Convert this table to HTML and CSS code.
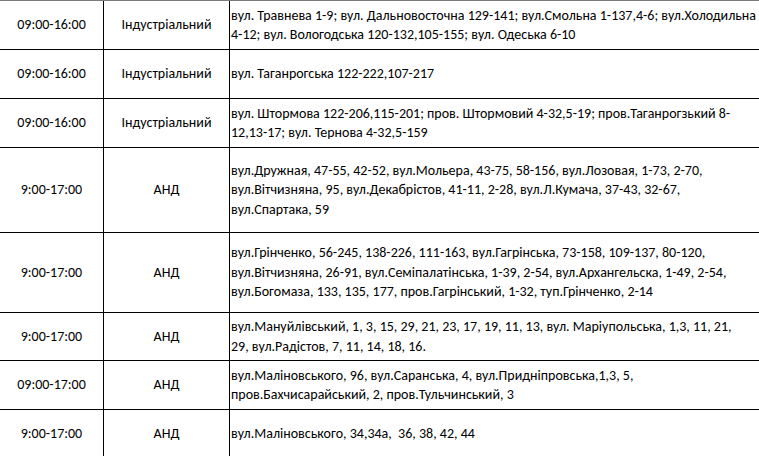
FILE: index.html
```html
<!DOCTYPE html>
<html lang="uk">
<head>
<meta charset="utf-8">
<title>Графік відключень</title>
<link rel="stylesheet" href="styles.css">
</head>
<body>
<table class="sched">
  <colgroup>
    <col class="c-time">
    <col class="c-dist">
    <col class="c-addr">
  </colgroup>
  <tbody>
    <tr class="h48">
      <td class="time">09:00-16:00</td>
      <td class="dist">Індустріальний</td>
      <td class="addr">вул. Травнева 1-9; вул. Дальновосточна 129-141; вул.Смольна 1-137,4-6; вул.Холодильна<br>4-12; вул. Вологодська 120-132,105-155; вул. Одеська 6-10</td>
    </tr>
    <tr class="h48">
      <td class="time">09:00-16:00</td>
      <td class="dist">Індустріальний</td>
      <td class="addr">вул. Таганрогська 122-222,107-217</td>
    </tr>
    <tr class="h48">
      <td class="time">09:00-16:00</td>
      <td class="dist">Індустріальний</td>
      <td class="addr">вул. Штормова 122-206,115-201; пров. Штормовий 4-32,5-19; пров.Таганрогзький 8-<br>12,13-17; вул. Тернова 4-32,5-159</td>
    </tr>
    <tr class="h84">
      <td class="time">9:00-17:00</td>
      <td class="dist">АНД</td>
      <td class="addr">вул.Дружная, 47-55, 42-52, вул.Мольера, 43-75, 58-156, вул.Лозовая, 1-73, 2-70,<br>вул.Вітчизняна, 95, вул.Декабрістов, 41-11, 2-28, вул.Л.Кумача, 37-43, 32-67,<br>вул.Спартака, 59</td>
    </tr>
    <tr class="h79">
      <td class="time">9:00-17:00</td>
      <td class="dist">АНД</td>
      <td class="addr">вул.Грінченко, 56-245, 138-226, 111-163, вул.Гагрінська, 73-158, 109-137, 80-120,<br>вул.Вітчизняна, 26-91, вул.Семіпалатінська, 1-39, 2-54, вул.Архангельска, 1-49, 2-54,<br>вул.Богомаза, 133, 135, 177, пров.Гагрінський, 1-32, туп.Грінченко, 2-14</td>
    </tr>
    <tr class="h47">
      <td class="time">9:00-17:00</td>
      <td class="dist">АНД</td>
      <td class="addr">вул.Мануйлівський, 1, 3, 15, 29, 21, 23, 17, 19, 11, 13, вул. Маріупольська, 1,3, 11, 21,<br>29, вул.Радістов, 7, 11, 14, 18, 16.</td>
    </tr>
    <tr class="h48">
      <td class="time">09:00-17:00</td>
      <td class="dist">АНД</td>
      <td class="addr">вул.Маліновського, 96, вул.Саранська, 4, вул.Придніпровська,1,3, 5,<br>пров.Бахчисарайський, 2, пров.Тульчинський, 3</td>
    </tr>
    <tr class="h48">
      <td class="time">9:00-17:00</td>
      <td class="dist">АНД</td>
      <td class="addr">вул.Маліновського, 34,34а, &nbsp;36, 38, 42, 44</td>
    </tr>
  </tbody>
</table>
</body>
</html>
```

FILE: styles.css
```css
html, body {
  margin: 0;
  padding: 0;
  background: #ffffff;
}

body {
  font-family: Carlito, Lato, "Liberation Sans", Arial, sans-serif;
  font-size: 14px;
  color: #000000;
  overflow: hidden;
}

.sched {
  border-collapse: separate;
  border-spacing: 0;
  table-layout: fixed;
  width: 759px;
  border-top: 1px solid #7a7a7a;
}

.c-time { width: 104px; }
.c-dist { width: 126px; }
.c-addr { width: 529px; }

.sched td {
  box-sizing: border-box;
  padding: 0 0 0 1px;
  border-right: 1px solid #000;
  border-bottom: 1px solid #000;
  vertical-align: middle;
  line-height: 19.5px;
}

.sched td.time,
.sched td.dist {
  text-align: center;
  padding: 0;
}

.sched td.addr {
  white-space: nowrap;
  text-align: left;
  padding-left: 1px;
  border-right: 0;
  overflow: hidden;
}

.h48 td { height: 49px; }
.h47 td { height: 48px; }
.h84 td { height: 85px; }
.h79 td { height: 80px; }
```
